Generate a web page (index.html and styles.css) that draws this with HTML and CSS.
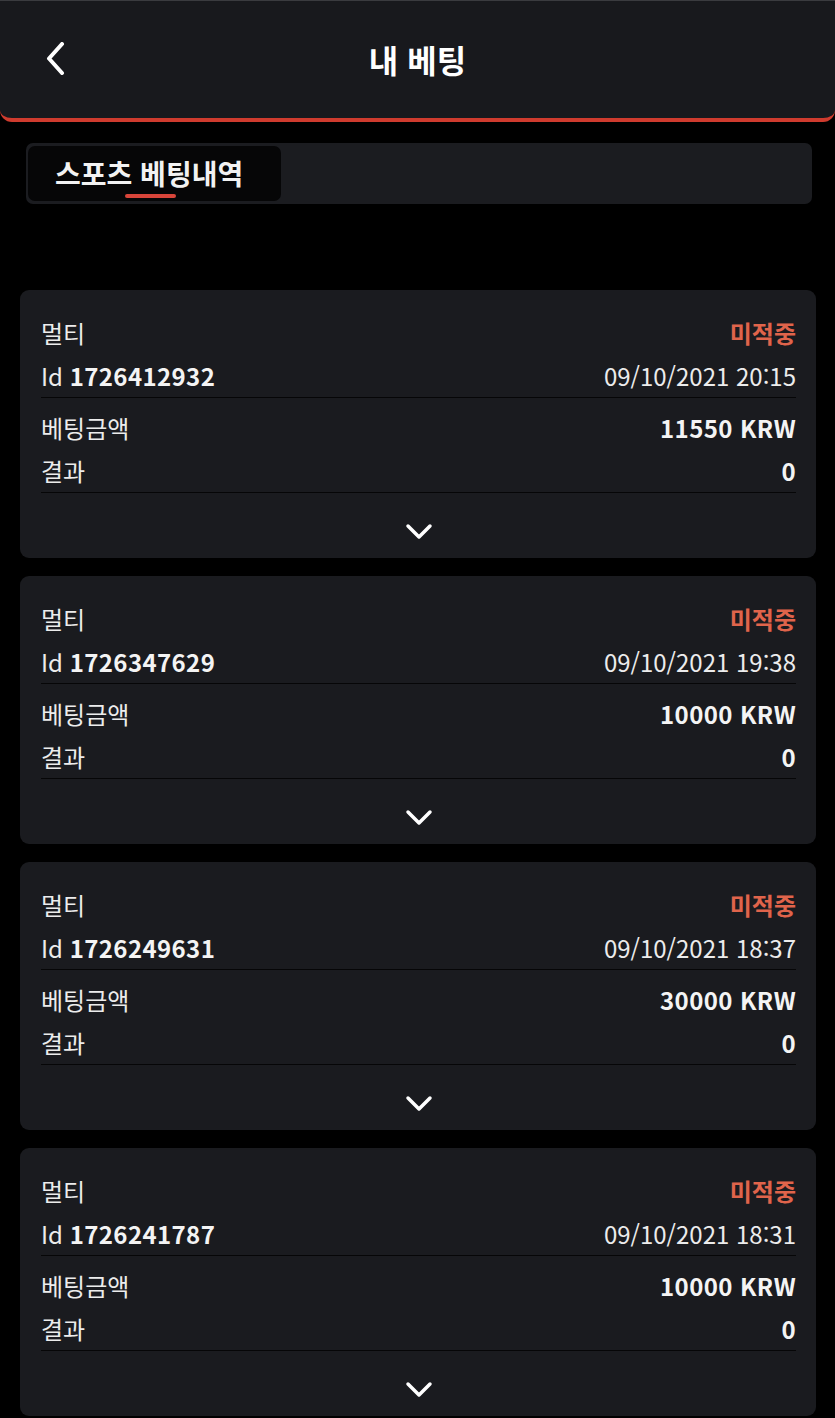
FILE: index.html
```html
<!DOCTYPE html>
<html lang="ko">
<head>
    <meta charset="UTF-8">
    <title>내 베팅</title>
    <link rel="stylesheet" href="styles.css">
</head>
<body>
    <header class="topbar">
        <a class="back" href="#">
            <svg width="20" height="33" viewBox="0 0 20 33"><path d="M17 2 L4 16.5 L17 31" fill="none" stroke="#fff" stroke-width="4" stroke-linecap="round" stroke-linejoin="round"/></svg>
        </a>
        <h1>내 베팅</h1>
        <span></span>
    </header>

    <div class="tabs">
        <div class="tab active">스포츠 베팅내역</div>
    </div>

    <div class="bets">
        <div class="bet">
            <div class="group">
                <div class="row"><span>멀티</span><span class="status">미적중</span></div>
                <div class="row"><span>Id <b>1726412932</b></span><span>09/10/2021 20:15</span></div>
            </div>
            <div class="group second">
                <div class="row"><span>베팅금액</span><b>11550 KRW</b></div>
                <div class="row"><span>결과</span><b>0</b></div>
            </div>
            <div class="more"><svg width="28" height="18" viewBox="0 0 28 18"><path d="M3 3 L14 14 L25 3" fill="none" stroke="#fff" stroke-width="3.5" stroke-linecap="round" stroke-linejoin="round"/></svg></div>
        </div>

        <div class="bet">
            <div class="group">
                <div class="row"><span>멀티</span><span class="status">미적중</span></div>
                <div class="row"><span>Id <b>1726347629</b></span><span>09/10/2021 19:38</span></div>
            </div>
            <div class="group second">
                <div class="row"><span>베팅금액</span><b>10000 KRW</b></div>
                <div class="row"><span>결과</span><b>0</b></div>
            </div>
            <div class="more"><svg width="28" height="18" viewBox="0 0 28 18"><path d="M3 3 L14 14 L25 3" fill="none" stroke="#fff" stroke-width="3.5" stroke-linecap="round" stroke-linejoin="round"/></svg></div>
        </div>

        <div class="bet">
            <div class="group">
                <div class="row"><span>멀티</span><span class="status">미적중</span></div>
                <div class="row"><span>Id <b>1726249631</b></span><span>09/10/2021 18:37</span></div>
            </div>
            <div class="group second">
                <div class="row"><span>베팅금액</span><b>30000 KRW</b></div>
                <div class="row"><span>결과</span><b>0</b></div>
            </div>
            <div class="more"><svg width="28" height="18" viewBox="0 0 28 18"><path d="M3 3 L14 14 L25 3" fill="none" stroke="#fff" stroke-width="3.5" stroke-linecap="round" stroke-linejoin="round"/></svg></div>
        </div>

        <div class="bet">
            <div class="group">
                <div class="row"><span>멀티</span><span class="status">미적중</span></div>
                <div class="row"><span>Id <b>1726241787</b></span><span>09/10/2021 18:31</span></div>
            </div>
            <div class="group second">
                <div class="row"><span>베팅금액</span><b>10000 KRW</b></div>
                <div class="row"><span>결과</span><b>0</b></div>
            </div>
            <div class="more"><svg width="28" height="18" viewBox="0 0 28 18"><path d="M3 3 L14 14 L25 3" fill="none" stroke="#fff" stroke-width="3.5" stroke-linecap="round" stroke-linejoin="round"/></svg></div>
        </div>
    </div>
</body>
</html>
```

FILE: styles.css
```css
body {
    margin: 0;
    background-color: #000;
    color: #ececec;
    font-family: "Noto Sans CJK KR", "Noto Sans", sans-serif;
}
.topbar {
    height: 122px;
    box-sizing: border-box;
    background-color: #18191d;
    border-top: 1px solid #3a3b3f;
    border-bottom: 4px solid #cf3b2e;
    border-radius: 0 0 12px 12px;
    display: grid;
    grid-template-columns: 120px 1fr 120px;
    align-items: center;
}
.back {
    display: flex;
    padding-left: 45px;
    padding-bottom: 2px;
}
.topbar h1 {
    margin: 0;
    text-align: center;
    font-size: 32px;
    font-weight: bold;
    color: #fff;
    padding-bottom: 2px;
}
.tabs {
    margin: 21px 23px 0 26px;
    height: 61px;
    padding: 3px 2px;
    box-sizing: border-box;
    background-color: #1b1c20;
    border-radius: 7px;
}
.tab {
    width: 253px;
    height: 55px;
    box-sizing: border-box;
    padding-left: 27px;
    line-height: 55px;
    font-size: 28px;
    font-weight: bold;
    color: #f2f2f2;
    background-color: #060607;
    border-radius: 7px;
    position: relative;
}
.tab.active::after {
    content: "";
    position: absolute;
    left: 97px;
    top: 48px;
    width: 51px;
    height: 4px;
    border-radius: 2px;
    background-color: #d8453a;
}
.bets {
    margin-top: 86px;
    padding: 0 19px 0 20px;
    display: flex;
    flex-direction: column;
    gap: 18px;
}
.bet {
    background-color: #1a1b1f;
    border-radius: 9px;
    padding: 21px 20px 0 21px;
}
.group {
    border-bottom: 1px solid #060607;
}
.group.second {
    padding-top: 8px;
}
.row {
    display: flex;
    justify-content: space-between;
    align-items: center;
    height: 43px;
    font-size: 24px;
}
.row b {
    font-weight: bold;
    color: #f4f4f4;
    letter-spacing: 0.4px;
}
.status {
    font-weight: bold;
    color: #e0644b;
}
.more {
    height: 65px;
    box-sizing: border-box;
    padding-top: 30px;
    display: flex;
    justify-content: center;
    align-items: flex-start;
}
```
